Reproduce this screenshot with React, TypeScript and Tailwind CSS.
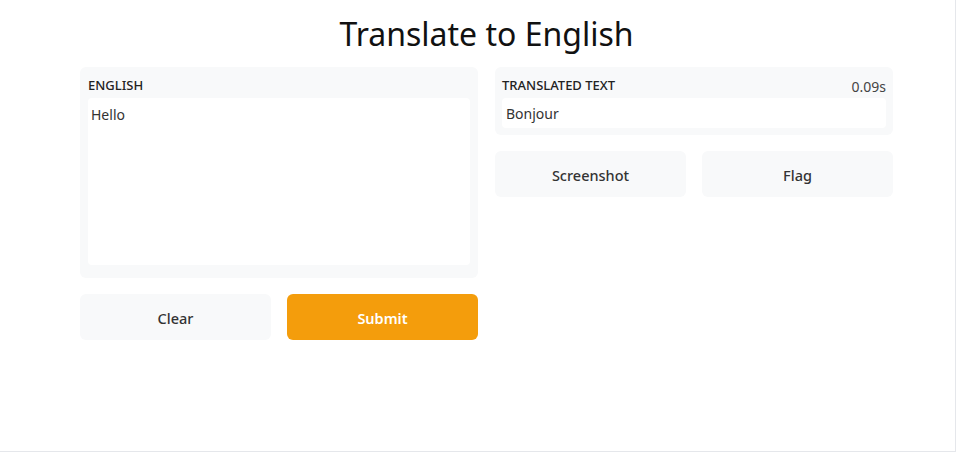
const App: React.FC = () => {
  return (
    <div
      className="w-[956px] h-[452px] bg-white border-r border-b border-[#e5e7eb] text-[#1f2328]"
      style={{ fontFamily: '"Noto Sans", "Open Sans", sans-serif' }}
    >
      <div className="w-[813px] ml-[80px]">
        <h1 className="text-center text-[32px] leading-[40px] pt-[14px] font-normal text-[#111]">
          Translate to English
        </h1>

        <div className="grid grid-cols-2 gap-[17px] mt-[13px]">
          {/* left */}
          <div className="flex flex-col">
            <div className="bg-[#f8f9fa] rounded-md px-2 pt-[10px] pb-[13px]">
              <span className="block text-[13px] leading-[16px] font-medium text-[#222] mb-[5px]">
                ENGLISH
              </span>
              <div className="bg-white rounded h-[167px] px-[3px] pt-[7px] text-sm text-[#333]">
                Hello
              </div>
            </div>
            <div className="grid grid-cols-2 gap-4 mt-[16px]">
              <button className="h-[46px] pt-[3px] rounded-md bg-[#f8f9fa] text-[14.5px] font-medium text-[#333]">
                Clear
              </button>
              <button className="h-[46px] pt-[3px] rounded-md bg-[#f49d0c] text-[14.5px] font-semibold text-white">
                Submit
              </button>
            </div>
          </div>

          {/* right */}
          <div className="flex flex-col">
            <div className="bg-[#f8f9fa] rounded-md px-[7px] pt-[10px] pb-[7px]">
              <div className="flex justify-between items-end mb-[5px]">
                <span className="text-[13px] leading-[16px] font-medium text-[#222]">
                  TRANSLATED TEXT
                </span>
                <span className="text-[14px] leading-[16px] text-[#444] translate-y-[2px]">0.09s</span>
              </div>
              <div className="bg-white rounded h-[30px] px-1 pt-[2px] flex items-center text-sm text-[#333]">
                Bonjour
              </div>
            </div>
            <div className="grid grid-cols-2 gap-4 mt-[16px]">
              <button className="h-[46px] pt-[3px] rounded-md bg-[#f8f9fa] text-[14.5px] font-medium text-[#333]">
                Screenshot
              </button>
              <button className="h-[46px] pt-[3px] rounded-md bg-[#f8f9fa] text-[14.5px] font-medium text-[#333]">
                Flag
              </button>
            </div>
          </div>
        </div>
      </div>
    </div>
  );
};

export default App;
